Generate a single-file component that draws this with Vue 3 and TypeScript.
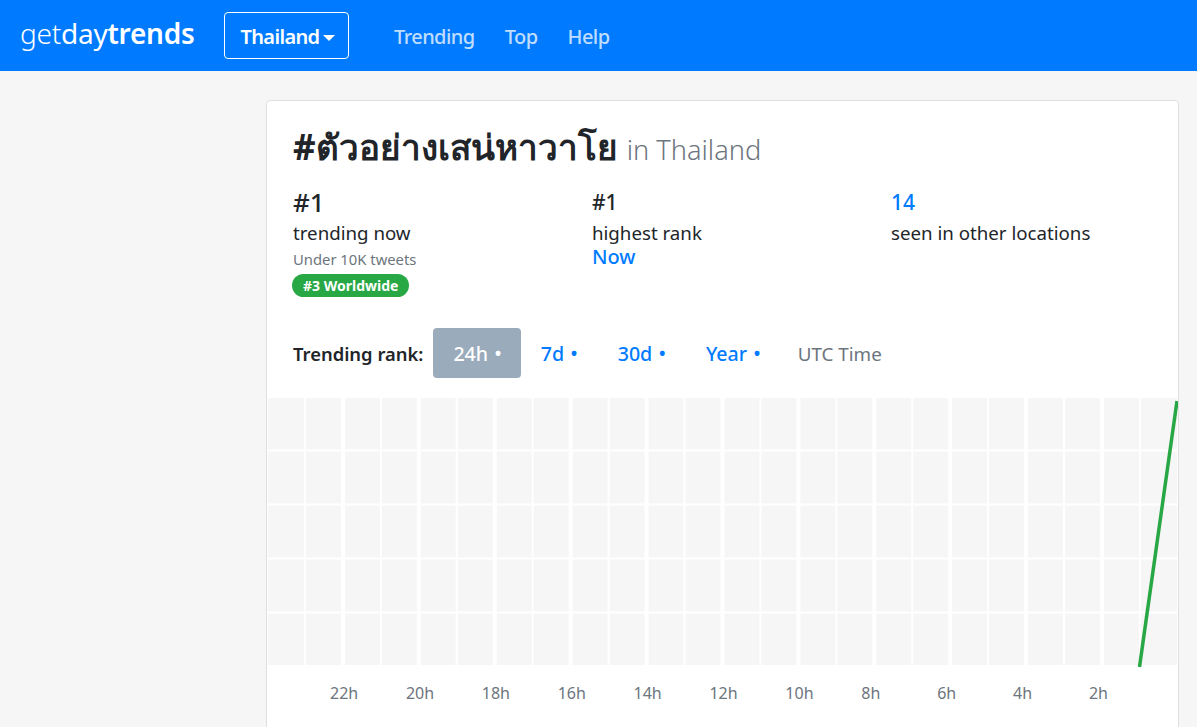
<script setup lang="ts">
const navLinks = ["Trending", "Top", "Help"]
const ranges = ["7d", "30d", "Year"]

// hour labels along the bottom of the chart
const hours = [22, 20, 18, 16, 14, 12, 10, 8, 6, 4, 2]

// grid lines, in chart coordinates (chart starts at the card's inner left edge)
const majorX = hours.map((_, i) => 76 + i * 75.9)
const minorX = hours.map((_, i) => 38 + i * 75.9).concat(38 + 11 * 75.9)
const rowY = [52.5, 106.5, 160.5, 214.5]
</script>

<template>
  <div class="page">
    <header class="navbar">
      <a class="brand">get<span class="day">day</span><b>trends</b></a>
      <button class="country">Thailand<i class="caret"></i></button>
      <nav class="links">
        <a v-for="link in navLinks" :key="link">{{ link }}</a>
      </nav>
    </header>

    <main class="main">
      <section class="card">
        <h1 class="title">#ตัวอย่างเสน่หาวาโย <small>in Thailand</small></h1>

        <div class="stats">
          <div class="stat">
            <div class="num big">#1</div>
            <div class="label">trending now</div>
            <div class="sub">Under 10K tweets</div>
            <span class="badge">#3 Worldwide</span>
          </div>
          <div class="stat">
            <div class="num">#1</div>
            <div class="label">highest rank</div>
            <a class="now">Now</a>
          </div>
          <div class="stat">
            <a class="num blue">14</a>
            <div class="label">seen in other locations</div>
          </div>
        </div>

        <div class="tabs">
          <strong class="tabs-label">Trending rank:</strong>
          <a class="tab active">24h <span class="dot">•</span></a>
          <a v-for="r in ranges" :key="r" class="tab">{{ r }} <span class="dot">•</span></a>
          <span class="utc">UTC Time</span>
        </div>

        <div class="chart">
          <svg class="grid" width="911" height="271" viewBox="0 0 911 271">
            <rect x="1" y="0" width="909" height="267" fill="#f6f6f6" />
            <line v-for="x in minorX" :key="'m' + x" :x1="x" :x2="x" y1="0" y2="267" stroke="#fff" stroke-width="2" />
            <line v-for="x in majorX" :key="'M' + x" :x1="x" :x2="x" y1="0" y2="267" stroke="#fff" stroke-width="4" />
            <line v-for="y in rowY" :key="y" x1="0" x2="911" :y1="y" :y2="y" stroke="#fff" stroke-width="2" />
            <line x1="872.5" y1="269" x2="910" y2="3" stroke="#28a745" stroke-width="3.5" />
          </svg>
          <div class="axis">
            <span v-for="h in hours" :key="h">{{ h }}h</span>
          </div>
        </div>
      </section>
    </main>
  </div>
</template>

<style>
html,
body {
  margin: 0;
  background: #f6f6f6;
}
</style>

<style scoped>
.page {
  height: 727px;
  overflow: hidden;
  background: #f6f6f6;
  font-family: "Noto Sans", "Open Sans", sans-serif;
  color: #212529;
}

.navbar {
  height: 71px;
  background: #007bff;
  display: flex;
  align-items: center;
  padding-left: 20px;
  box-sizing: border-box;
}

.brand {
  font-size: 28px;
  font-weight: 300;
  color: #fff;
  letter-spacing: -0.25px;
  width: 204px;
  margin-top: -5px;
}

.brand .day {
  font-weight: 400;
}

.brand b {
  font-weight: 600;
}

.country {
  width: 125px;
  height: 47px;
  border: 1px solid #fff;
  border-radius: 4px;
  background: transparent;
  color: #fff;
  font: 600 20px "Noto Sans", sans-serif;
  letter-spacing: -0.65px;
  padding: 2px 0 0 3px;
}

.caret {
  display: inline-block;
  margin-left: 4px;
  vertical-align: 3px;
  border-top: 6px solid #fff;
  border-left: 6px solid transparent;
  border-right: 6px solid transparent;
}

.links {
  display: flex;
  gap: 30px;
  margin-left: 45px;
  margin-top: 2px;
  font-size: 20px;
  font-weight: 500;
  letter-spacing: -0.55px;
  color: rgba(255, 255, 255, 0.75);
}

.main {
  padding: 29px 18px 0 266px;
}

.card {
  background: #fff;
  border: 1px solid #dfdfdf;
  border-radius: 4px;
  height: 640px;
}

.title {
  margin: 24px 26px 0;
  height: 44px;
  font-size: 35px;
  line-height: 44px;
  font-weight: 700;
  white-space: nowrap;
}

.title small {
  font-size: 27.2px;
  font-weight: 300;
  color: #6c757d;
}

.stats {
  display: grid;
  grid-template-columns: repeat(3, 299px);
  margin: 16px 26px 0;
}

.stat {
  display: flex;
  flex-direction: column;
  align-items: flex-start;
}

.num {
  font-size: 21px;
  line-height: 34px;
  font-weight: 500;
}

.num.big {
  font-size: 26px;
}

.blue,
.now {
  color: #007bff;
}

.label {
  font-size: 18.7px;
  line-height: 28px;
}

.now {
  font-size: 20px;
  line-height: 20px;
  font-weight: 500;
}

.sub {
  font-size: 14.8px;
  line-height: 24px;
  color: #6c757d;
}

.badge {
  margin-top: 3px;
  margin-left: -1px;
  background: #28a745;
  color: #fff;
  font-size: 14px;
  font-weight: 700;
  line-height: 23px;
  padding: 0 11px;
  border-radius: 12px;
}

.tabs {
  display: flex;
  align-items: center;
  margin: 31px 0 0 26px;
  font-size: 19.6px;
  height: 50px;
}

.tabs-label {
  font-size: 18.4px;
  font-weight: 600;
  margin-right: 10px;
}

.tab {
  height: 50px;
  line-height: 52px;
  padding: 0 20px;
  color: #007bff;
  font-weight: 500;
  border-radius: 4px;
  white-space: nowrap;
}

.tab.active {
  padding-right: 19px;
  background: #9aabbc;
  color: #fff;
}

.dot {
  font-size: 20px;
  margin-left: 1px;
}

.utc {
  margin-left: 17px;
  padding-top: 2px;
  font-size: 18.8px;
  color: #6c757d;
}

.chart {
  margin-top: 20px;
}

.grid {
  display: block;
}

.axis {
  display: grid;
  grid-template-columns: repeat(11, 75.9px);
  margin: 11px 0 0 63px;
  font-size: 16px;
  line-height: 26px;
  color: #6c757d;
}
</style>
